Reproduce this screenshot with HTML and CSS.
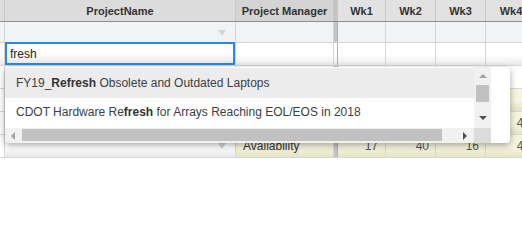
FILE: index.html
```html
<!DOCTYPE html>
<html lang="en">
<head>
  <meta charset="UTF-8" />
  <title>Projects</title>
  <link rel="stylesheet" href="styles.css">
</head>
<body>
  <div class="sheet">
    <div class="row head">
      <div class="cell gutter"></div>
      <div class="cell name">ProjectName</div>
      <div class="cell mgr">Project Manager</div>
      <div class="cell split"></div>
      <div class="cell wk first">Wk1</div>
      <div class="cell wk">Wk2</div>
      <div class="cell wk">Wk3</div>
      <div class="cell wk last">Wk4</div>
    </div>

    <div class="row filter">
      <div class="cell gutter"></div>
      <div class="cell name"><span class="caret"></span></div>
      <div class="cell mgr"></div>
      <div class="cell split"></div>
      <div class="cell wk first"></div>
      <div class="cell wk"></div>
      <div class="cell wk"></div>
      <div class="cell wk last"></div>
    </div>

    <div class="row edit">
      <div class="cell gutter"></div>
      <div class="cell name"><input class="search" type="text" value="fresh"></div>
      <div class="cell mgr"></div>
      <div class="cell split"></div>
      <div class="cell wk first"></div>
      <div class="cell wk"></div>
      <div class="cell wk"></div>
      <div class="cell wk last"></div>
    </div>

    <div class="row">
      <div class="cell gutter"></div>
      <div class="cell name"></div>
      <div class="cell mgr"></div>
      <div class="cell split"></div>
      <div class="cell wk first"></div>
      <div class="cell wk"></div>
      <div class="cell wk"></div>
      <div class="cell wk last"></div>
    </div>

    <div class="row avail">
      <div class="cell gutter"></div>
      <div class="cell name"></div>
      <div class="cell mgr"></div>
      <div class="cell split"></div>
      <div class="cell wk first"></div>
      <div class="cell wk"></div>
      <div class="cell wk"></div>
      <div class="cell wk last"></div>
    </div>

    <div class="row avail">
      <div class="cell gutter"></div>
      <div class="cell name"></div>
      <div class="cell mgr">Availability</div>
      <div class="cell split"></div>
      <div class="cell wk first num">17</div>
      <div class="cell wk num">40</div>
      <div class="cell wk num">16</div>
      <div class="cell wk num last">40</div>
    </div>

    <div class="row avail">
      <div class="cell gutter"></div>
      <div class="cell name"><span class="caret"></span></div>
      <div class="cell mgr">Availability</div>
      <div class="cell split"></div>
      <div class="cell wk first num">17</div>
      <div class="cell wk num">40</div>
      <div class="cell wk num">16</div>
      <div class="cell wk num last">40</div>
    </div>
  </div>

  <div class="suggest">
    <div class="suggest-body">
      <div class="suggest-list">
        <div class="item hover">FY19_<b>Refresh</b> Obsolete and Outdated Laptops</div>
        <div class="item">CDOT Hardware Re<b>fresh</b> for Arrays Reaching EOL/EOS in 2018</div>
      </div>
      <div class="vbar">
        <span class="arrow up"></span>
        <span class="vthumb"></span>
        <span class="arrow down"></span>
      </div>
    </div>
    <div class="suggest-foot">
      <div class="hbar">
        <span class="arrow left"></span>
        <span class="hthumb"></span>
        <span class="arrow right"></span>
      </div>
      <div class="corner"></div>
    </div>
  </div>
</body>
</html>
```

FILE: styles.css
```css
* {
  margin: 0;
  padding: 0;
  box-sizing: border-box;
}
body {
  width: 522px;
  height: 242px;
  overflow: hidden;
  background: #fff;
  font-family: 'Liberation Sans', Arial, sans-serif;
  font-size: 12px;
  color: #333;
  position: relative;
}
.sheet {
  width: 540px;
}
.row {
  display: flex;
  height: 23px;
  border-bottom: 1px solid #d6d6d6;
}
.cell {
  flex: none;
  height: 100%;
  border-right: 1px solid #d6d6d6;
  display: flex;
  align-items: center;
  position: relative;
}
.gutter { width: 5px; }
.name { width: 231px; }
.mgr { width: 98px; padding-left: 7px; }
.split {
  width: 4px;
  background: #c4c4c4;
  border-right: 1px solid #b0b0b0;
}
.wk { width: 50px; justify-content: center; }
.wk.first { width: 48px; }
.wk.last { width: 50px; border-right: none; }
.num { justify-content: flex-end; padding-right: 6px; color: #555; }
.num.first { padding-right: 7px; }

.head {
  height: 22px;
  background: #dcdcdc;
  border-bottom: 1px solid #8e8e8e;
  font-size: 11px;
  font-weight: bold;
}
.head .cell { border-right-color: #c8c8c8; }
.head .name, .head .mgr { justify-content: center; padding-left: 0; }
.head .mgr { background: #d4d4d4; }
.head .wk { background: #e2e2e2; }

.filter {
  height: 21px;
  background: #f2f3f5;
}
.caret {
  position: absolute;
  right: 9px;
  top: 8px;
  border-left: 4px solid transparent;
  border-right: 4px solid transparent;
  border-top: 6px solid #d4d4d4;
}

.edit .cell { background: linear-gradient(#fff 55%, #e9e9e9); }
.edit .name { background: none; }
.search {
  width: 100%;
  height: 23px;
  margin-top: -1px;
  border: 2px solid #2b87e3;
  padding-left: 3px;
  font-family: 'Liberation Sans', Arial, sans-serif;
  font-size: 12px;
  color: #222;
  background: linear-gradient(#fff 50%, #e8e8e8);
  outline: none;
}

.avail .mgr,
.avail .wk {
  background: linear-gradient(#f7f5de 55%, #e6e3c6);
}
.avail .name { background: linear-gradient(#fff 55%, #e8e8e8); }

.suggest {
  position: absolute;
  left: 5px;
  top: 67px;
  width: 505px;
  height: 76px;
  background: #fff;
  border-radius: 4px;
  box-shadow: 0 2px 7px rgba(0, 0, 0, 0.35);
  padding-right: 19px;
  overflow: hidden;
}
.suggest-body {
  display: flex;
  height: 61px;
}
.suggest-list {
  flex: 1;
  padding-top: 1px;
}
.item {
  height: 30px;
  line-height: 30px;
  padding-left: 11px;
  white-space: nowrap;
  font-size: 12px;
  color: #3a3f45;
}
.item.hover { background: #ececec; }
.item b { color: #333; }
.item:last-child { height: 29px; line-height: 29px; }

.vbar {
  width: 17px;
  background: #f1f1f1;
  position: relative;
}
.vthumb {
  position: absolute;
  left: 2px;
  top: 18px;
  width: 13px;
  height: 17px;
  background: #c1c1c1;
}
.arrow {
  position: absolute;
  width: 0;
  height: 0;
}
.up {
  left: 5px;
  top: 7px;
  border-left: 4px solid transparent;
  border-right: 4px solid transparent;
  border-bottom: 4px solid #a3a3a3;
}
.down {
  left: 5px;
  top: 49px;
  border-left: 4px solid transparent;
  border-right: 4px solid transparent;
  border-top: 4px solid #505050;
}
.suggest-foot {
  display: flex;
  height: 15px;
}
.hbar {
  flex: 1;
  background: #f1f1f1;
  position: relative;
}
.hthumb {
  position: absolute;
  left: 17px;
  top: 1px;
  width: 420px;
  height: 12px;
  background: #c1c1c1;
}
.left {
  left: 6px;
  top: 4px;
  border-top: 4px solid transparent;
  border-bottom: 4px solid transparent;
  border-right: 4px solid #a3a3a3;
}
.right {
  right: 7px;
  top: 4px;
  border-top: 4px solid transparent;
  border-bottom: 4px solid transparent;
  border-left: 4px solid #505050;
}
.corner {
  width: 17px;
  background: #dcdcdc;
}
```
